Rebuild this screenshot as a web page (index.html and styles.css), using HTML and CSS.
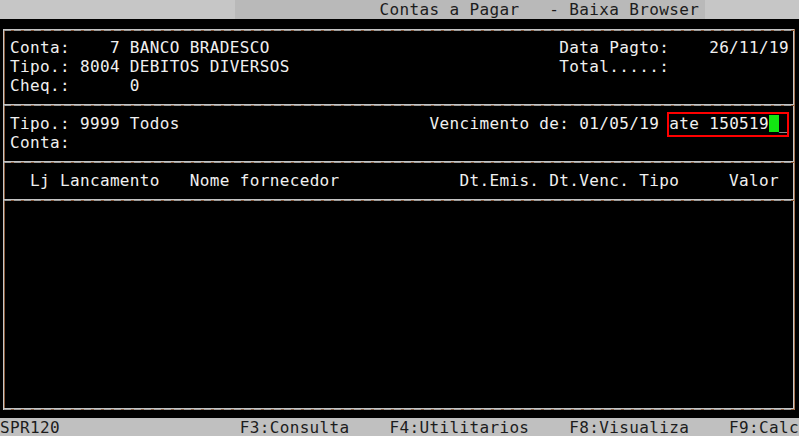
FILE: index.html
```html
<!DOCTYPE html>
<html lang="pt">
<head>
<meta charset="utf-8">
<title>Contas a Pagar - Baixa Browser</title>
<link rel="stylesheet" href="styles.css">
</head>
<body>
<div class="screen">
  <div class="titlebar">                                      Contas a Pagar   - Baixa Browser</div>
  <div class="frame">
    <div class="sec sec-top">
      <div class="row">Conta:    7 BANCO BRADESCO                             Data Pagto:    26/11/19</div>
      <div class="row">Tipo.: 8004 DEBITOS DIVERSOS                           Total.....:</div>
      <div class="row">Cheq.:      0</div>
    </div>
    <div class="rule"></div>
    <div class="sec">
      <div class="row">Tipo.: 9999 Todos                         Vencimento de: 01/05/19 <span class="field">ate 150519<span class="cursor"> </span>_</span></div>
      <div class="row">Conta:</div>
    </div>
    <div class="rule"></div>
    <div class="sec">
      <div class="row">  Lj Lancamento   Nome fornecedor            Dt.Emis. Dt.Venc. Tipo     Valor</div>
    </div>
    <div class="rule"></div>
    <div class="sec body"></div>
    <div class="rule rule-bottom"></div>
  </div>
  <div class="footer">SPR120                  F3:Consulta    F4:Utilitarios    F8:Visualiza    F9:Calc</div>
</div>
</body>
</html>
```
FILE: styles.css
```css
html, body {
  margin: 0;
  padding: 0;
  background: #000;
}
body {
  width: 799px;
  height: 436px;
  overflow: hidden;
}
.screen {
  width: 799px;
  height: 436px;
  background: #000;
  font-family: "DejaVu Sans Mono", monospace;
  font-size: 16px;
  letter-spacing: 0.355px;
  color: #f0f0f0;
  display: flex;
  flex-direction: column;
}
.titlebar {
  height: 19px;
  line-height: 19px;
  white-space: pre;
  color: #1c1c1c;
  background: linear-gradient(to right, #c6c6c6 0, #c6c6c6 235px, #b9b9b9 235px, #b9b9b9 705px, #c6c6c6 705px);
  overflow: hidden;
}
.frame {
  margin: 10px 4px 0 3px;
  border-left: 1px solid #c8c8c8;
  border-right: 1px solid #a9734e;
  box-shadow: inset 1px 0 0 #8a5a3a, inset -1px 0 0 #c8c8c8;
  display: flex;
  flex-direction: column;
  position: relative;
}
.frame::before {
  content: "";
  display: block;
  height: 2px;
  background:
    linear-gradient(#c4c4c4, #c4c4c4) top / 100% 1px no-repeat,
    repeating-linear-gradient(to right, #9c9c9c 0, #9c9c9c 7px, #8a5a3a 7px, #8a5a3a 10px) bottom / 100% 1px no-repeat;
  margin-bottom: 7px;
}
.sec {
  padding-left: 6px;
  display: flex;
  flex-direction: column;
}
.row {
  height: 19px;
  line-height: 19px;
  white-space: pre;
}
.rule {
  height: 2px;
  margin: 9px 0 8px;
  background:
    linear-gradient(#c4c4c4, #c4c4c4) top / 100% 1px no-repeat,
    repeating-linear-gradient(to right, #9c9c9c 0, #9c9c9c 7px, #8a5a3a 7px, #8a5a3a 10px) bottom / 100% 1px no-repeat;
}
.rule-bottom {
  margin-bottom: 0;
}
.body {
  height: 190px;
}
.field {
  display: inline-block;
  height: 19px;
  line-height: 19px;
  vertical-align: top;
  position: relative;
}
.field::after {
  content: "";
  position: absolute;
  top: -2px;
  bottom: -4px;
  left: -2px;
  right: 0;
  border: 2px solid #ff0000;
}
.cursor {
  display: inline-block;
  height: 19px;
  vertical-align: top;
  background: linear-gradient(to bottom, transparent 1px, #12e612 1px, #12e612 18px, transparent 18px);
}
.footer {
  margin-top: 8px;
  height: 19px;
  line-height: 19px;
  white-space: pre;
  color: #1c1c1c;
  background: #c0c0c0;
  overflow: hidden;
}
```
